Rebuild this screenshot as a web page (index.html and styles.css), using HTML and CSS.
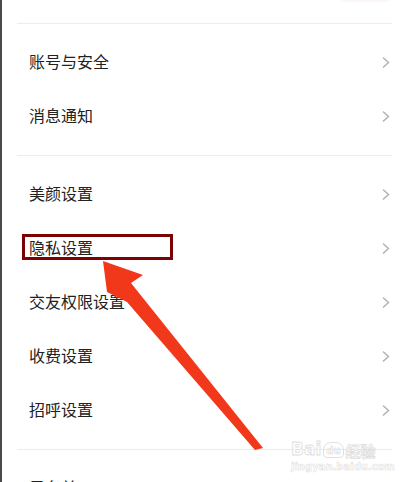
FILE: index.html
```html
<!DOCTYPE html>
<html lang="zh-CN">
<head>
<meta charset="utf-8">
<title>设置</title>
<link rel="stylesheet" href="styles.css">
</head>
<body>
<div class="page">
  <div class="top-btn"></div>
  <div class="list">
    <div class="top-space"></div>
    <section class="group">
      <div class="row"><span class="label">账号与安全</span><svg class="chev" viewBox="0 0 8 11"><path d="M1.5 1 L6.5 5.5 L1.5 10"/></svg></div>
      <div class="row"><span class="label">消息通知</span><svg class="chev" viewBox="0 0 8 11"><path d="M1.5 1 L6.5 5.5 L1.5 10"/></svg></div>
    </section>
    <section class="group">
      <div class="row"><span class="label">美颜设置</span><svg class="chev" viewBox="0 0 8 11"><path d="M1.5 1 L6.5 5.5 L1.5 10"/></svg></div>
      <div class="row highlight"><span class="label">隐私设置</span><svg class="chev" viewBox="0 0 8 11"><path d="M1.5 1 L6.5 5.5 L1.5 10"/></svg><div class="mark-box"></div></div>
      <div class="row"><span class="label">交友权限设置</span><svg class="chev" viewBox="0 0 8 11"><path d="M1.5 1 L6.5 5.5 L1.5 10"/></svg></div>
      <div class="row"><span class="label">收费设置</span><svg class="chev" viewBox="0 0 8 11"><path d="M1.5 1 L6.5 5.5 L1.5 10"/></svg></div>
      <div class="row"><span class="label">招呼设置</span><svg class="chev" viewBox="0 0 8 11"><path d="M1.5 1 L6.5 5.5 L1.5 10"/></svg></div>
    </section>
    <section class="group">
      <div class="row"><span class="label">黑名单</span><svg class="chev" viewBox="0 0 8 11"><path d="M1.5 1 L6.5 5.5 L1.5 10"/></svg></div>
    </section>
  </div>
  <svg class="arrow" viewBox="0 0 406 482" width="406" height="482">
    <polygon points="103,261 143,275 131,283 263,448 255,450 127,302 107,292"/>
  </svg>
  <div class="watermark">
    <div class="wm-top"><span class="wm-bai">Bai</span><span class="wm-paw">du</span><span class="wm-jy">经验</span></div>
    <div class="wm-url">jingyan.baidu.com</div>
  </div>
</div>
</body>
</html>
```
FILE: styles.css
```css
* { box-sizing: border-box; }
html, body { margin: 0; padding: 0; background: #fff; }
body {
  font-family: "Noto Sans CJK SC", "Noto Sans", sans-serif;
  width: 406px;
  height: 482px;
  overflow: hidden;
}
.page {
  position: relative;
  width: 406px;
  height: 482px;
  border-left: 2px solid #4a4a4a;
  overflow: hidden;
}
.top-btn {
  position: absolute;
  left: 338px;
  top: -10px;
  width: 50px;
  height: 12px;
  border-radius: 4px;
  background: #fdf7f7;
}
.list {
  padding: 0 14px 0 15px;
}
.top-space { height: 23px; }
.group {
  border-top: 1px solid #ececec;
  padding: 11px 0 12px;
}
.row {
  position: relative;
  height: 54px;
  display: flex;
  align-items: center;
  justify-content: space-between;
  padding: 0 2px 0 12px;
}
.label {
  font-size: 16px;
  color: #222;
  line-height: 1;
  position: relative;
  top: -1px;
}
.chev {
  width: 8px;
  height: 11px;
  fill: none;
  stroke: #b3b3b3;
  stroke-width: 1.6;
  stroke-linecap: round;
  stroke-linejoin: round;
}
.mark-box {
  position: absolute;
  left: 5px;
  top: 13px;
  width: 151px;
  height: 26px;
  border: 3px solid #7b0303;
}
.arrow {
  position: absolute;
  left: -2px;
  top: 0;
}
.arrow polygon { fill: #f2381b; }
.watermark {
  position: absolute;
  left: 289px;
  top: 436px;
  width: 100px;
  color: #fff;
  font-family: "DejaVu Sans", sans-serif;
  opacity: 0.75;
}
.wm-top {
  display: flex;
  align-items: flex-end;
  gap: 2px;
  height: 22px;
}
.wm-bai {
  font-size: 17px;
  font-weight: bold;
  line-height: 1;
  -webkit-text-stroke: 0.8px #d4d4d4;
}
.wm-paw {
  font-size: 10px;
  font-weight: bold;
  line-height: 1;
  padding: 3px 2px 1px;
  border: 1px solid #d8d8d8;
  border-radius: 8px 8px 4px 4px;
  -webkit-text-stroke: 0.6px #d0d0d0;
}
.wm-jy {
  font-family: "Noto Sans CJK SC", sans-serif;
  font-size: 15px;
  font-weight: bold;
  line-height: 1;
  -webkit-text-stroke: 0.8px #d4d4d4;
}
.wm-url {
  font-size: 10px;
  font-weight: bold;
  margin-top: 3px;
  -webkit-text-stroke: 0.6px #d8d8d8;
}
```
